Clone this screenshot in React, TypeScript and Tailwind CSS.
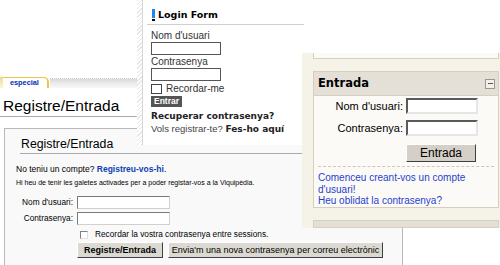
import React from "react";

const sans = "font-['Liberation_Sans',Arial,sans-serif]";
const verd = "font-['DejaVu_Sans',Verdana,sans-serif]";

function WikiLayer() {
  return (
    <div className={`absolute left-0 top-0 w-[403px] h-[265px] flex flex-col ${sans}`}>
      <div className="mt-[77px] flex h-[11px] w-[137px] items-stretch">
        <div className="w-[3px] bg-gradient-to-b from-[#efd98f] to-[#fdf6de]" />
        <div className="w-[46px] bg-white border-r-2 border-t border-[#f5c34a] rounded-tr-[5px] flex items-center pl-[7px] text-[7.3px] font-bold text-[#002bb8] leading-none">
          especial
        </div>
        <div className="flex-1 mt-[1px] ml-[1px] bg-gradient-to-b from-[#d9d9d9] via-[#ececec] to-[#f8f8f8] border-t border-dotted border-[#c8c8c8]" />
      </div>
      <div className="mt-[9px] ml-[3px] text-[15.5px] leading-[18px] text-black">Registre/Entrada</div>
      <div className="mt-[1px] h-px w-[137px] bg-[#aaaaaa]" />
      <div className="mt-[11px] ml-[4px] flex-1 flex flex-col border-l border-t border-r border-[#b8b8b8] bg-[#f9f9f9]">
        <div className="mt-[8px] ml-[16px] text-[12.3px] leading-[15px] text-black">Registre/Entrada</div>
        <div className="mt-px ml-[15px] mr-[6px] h-px bg-[#aaaaaa]" />
        <div className="mt-[10px] ml-[11px] text-[8.5px] leading-[11px] text-black">
          No teniu un compte? <span className="font-bold text-[#0b3fb5]">Registreu-vos-hi</span>.
        </div>
        <div className="mt-[3px] ml-[11px] text-[7px] leading-[9px] text-black">
          Hi heu de tenir les galetes activades per a poder registar-vos a la Viquipèdia.
        </div>
        <div className="mt-[9px] flex items-center h-[13px]">
          <div className="w-[68px] text-right text-[8.3px] leading-none text-black">Nom d'usuari:</div>
          <div className="ml-[4px] w-[93px] h-[13px] bg-white border border-t-[#7a7a7a] border-l-[#7a7a7a] border-b-[#d4d0c8] border-r-[#d4d0c8]" />
        </div>
        <div className="mt-[3px] flex items-center h-[13px]">
          <div className="w-[68px] text-right text-[8.3px] leading-none text-black">Contrasenya:</div>
          <div className="ml-[4px] w-[93px] h-[13px] bg-white border border-t-[#7a7a7a] border-l-[#7a7a7a] border-b-[#d4d0c8] border-r-[#d4d0c8]" />
        </div>
        <div className="mt-[4px] flex items-center h-[11px]">
          <div className="ml-[75px] w-[8px] h-[8px] bg-white border border-t-[#808080] border-l-[#808080] border-b-[#e0e0e0] border-r-[#e0e0e0]" />
          <div className="ml-[7px] text-[8.3px] leading-none text-black">Recordar la vostra contrasenya entre sessions.</div>
        </div>
        <div className="mt-[2px] ml-[72px] flex gap-[5px]">
          <div className="w-[86px] h-[16px] flex items-center justify-center bg-[#dcd9d2] border border-t-white border-l-white border-b-[#404040] border-r-[#404040] text-[9px] font-bold text-black leading-none">
            Registre/Entrada
          </div>
          <div className="w-[215px] h-[16px] flex items-center justify-center bg-[#dcd9d2] border border-t-white border-l-white border-b-[#404040] border-r-[#404040] text-[9px] text-black leading-none">
            Envia'm una nova contrasenya per correu electrònic
          </div>
        </div>
      </div>
    </div>
  );
}

function JoomlaLayer() {
  return (
    <div className={`absolute left-[137px] top-0 w-[200px] h-[145px] bg-white flex ${sans}`}>
      <div className="w-[6px] h-full bg-[repeating-linear-gradient(135deg,#e6e6e6_0px,#e6e6e6_1px,#ffffff_1px,#ffffff_3px)] border-r border-[#d6d6d6]" />
      <div className="flex-1 flex flex-col pl-[4px]">
        <div className="mt-[8px] ml-[5px] flex items-center h-[13px]">
          <div className="flex flex-col w-[3px] h-[12px]">
            <div className="h-[9px] bg-[#1e88e5]" />
            <div className="mt-px h-[2px] bg-black" />
          </div>
          <div className={`ml-[3px] text-[9.5px] font-bold text-black leading-none ${verd}`}>Login Form</div>
        </div>
        <div className="mt-[3px] w-[157px] h-px bg-[#cfcfcf]" />
        <div className="mt-[5px] ml-[4px] text-[10px] leading-[12px] text-[#333]">Nom d'usuari</div>
        <div className="ml-[4px] w-[70px] h-[13px] bg-white border border-[#555]" />
        <div className="mt-px ml-[4px] text-[10px] leading-[12px] text-[#333]">Contrasenya</div>
        <div className="ml-[4px] w-[70px] h-[13px] bg-white border border-[#555]" />
        <div className="mt-[2px] ml-[4px] flex items-center h-[11px]">
          <div className="w-[11px] h-[10px] bg-white border border-[#444]" />
          <div className="ml-[4px] text-[10px] leading-none text-[#333]">Recordar-me</div>
        </div>
        <div className="mt-[2px] ml-[4px] w-[31px] h-[11px] bg-[#555] flex items-center justify-center text-[8.5px] font-bold text-white leading-none">
          Entrar
        </div>
        <div className={`mt-[3px] ml-[4px] text-[9px] leading-[12px] font-bold text-[#222] ${verd}`}>Recuperar contrasenya?</div>
        <div className="mt-px ml-[4px] text-[9.5px] leading-[12px] text-[#444] whitespace-nowrap">
          Vols registrar-te? <span className={`font-bold text-[9px] text-[#222] ${verd}`}>Fes-ho aquí</span>
        </div>
      </div>
    </div>
  );
}

function MoodleLayer() {
  const inset =
    "bg-white border-2 border-t-[#5a5a5a] border-l-[#5a5a5a] border-b-[#e6e6e6] border-r-[#e6e6e6]";
  return (
    <div className={`absolute left-[302px] top-[53px] w-[198px] h-[175px] bg-[#f5f3e8] flex flex-col ${sans}`}>
      <div className="ml-[11px] w-[186px] h-[8px] bg-[#fcfaf5] border-x border-b border-[#d6cfbf]" />
      <div className="mt-[12px] ml-[11px] w-[186px] h-[141px] border border-[#d6cfbf] bg-[#fcfaf6] flex flex-col">
        <div className="h-[24px] shrink-0 bg-[#e4e0d8] border-b border-[#d6cfbf] flex items-center justify-between pl-[4px] pr-[3px]">
          <div className={`text-[11.5px] font-bold text-black leading-none ${verd}`}>Entrada</div>
          <div className="w-[10px] h-[10px] border border-[#9d978b] bg-[#f3f0ea] flex items-center justify-center">
            <div className="w-[5px] h-px bg-[#555]" />
          </div>
        </div>
        <div className="mt-[2px] flex items-center h-[16px]">
          <div className="w-[89px] text-right text-[11px] leading-none text-black">Nom d'usuari:</div>
          <div className={`ml-[3px] w-[72px] h-[16px] ${inset}`} />
        </div>
        <div className="mt-[6px] flex items-center h-[16px]">
          <div className="w-[89px] text-right text-[11px] leading-none text-black">Contrasenya:</div>
          <div className={`ml-[3px] w-[72px] h-[16px] ${inset}`} />
        </div>
        <div className="mt-[8px] ml-[92px] w-[70px] h-[18px] bg-[#d4d0c8] border border-t-white border-l-white border-b-[#404040] border-r-[#404040] flex items-center justify-center text-[12px] text-black leading-none">
          Entrada
        </div>
        <div className="mt-[4px] mx-[4px] border-t border-dashed border-[#cfc6b3]" />
        <div className="mt-[5px] ml-[4px] text-[10px] leading-[11.5px] text-[#1f3fcf]">
          <div>Comenceu creant-vos un compte</div>
          <div>d'usuari!</div>
          <div>Heu oblidat la contrasenya?</div>
        </div>
      </div>
      <div className="mt-[12px] ml-[11px] w-[186px] h-[10px] bg-[#e4e0d8] border border-[#d6cfbf]" />
    </div>
  );
}

export default function App() {
  return (
    <div className="relative w-[500px] h-[265px] overflow-hidden bg-white">
      <WikiLayer />
      <JoomlaLayer />
      <MoodleLayer />
    </div>
  );
}
